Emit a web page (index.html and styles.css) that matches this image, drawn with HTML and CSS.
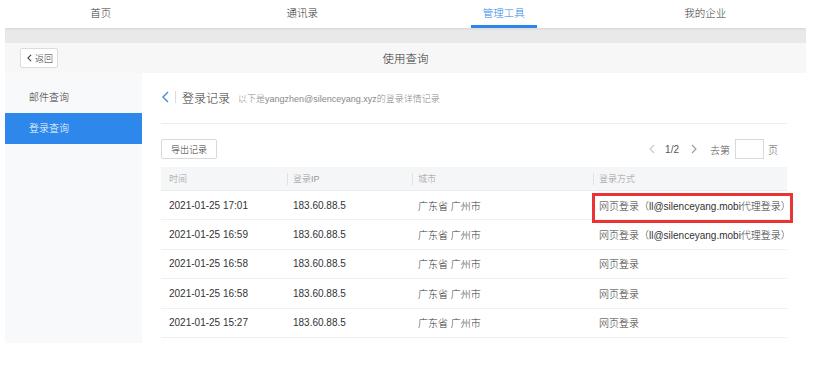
FILE: index.html
```html
<!DOCTYPE html>
<html lang="zh-CN">
<head>
  <meta charset="UTF-8"/>
  <meta name="viewport" content="width=device-width,initial-scale=1.0"/>
  <title>登录查询</title>
  <link rel="stylesheet" href="styles.css">
</head>
<body>
  <nav class="topnav">
    <a class="tab">首页</a>
    <a class="tab">通讯录</a>
    <a class="tab active"><span>管理工具</span></a>
    <a class="tab">我的企业</a>
  </nav>
  <div class="frame">
    <div class="bar">
      <div class="bar-left">
        <button class="back">
          <svg viewBox="0 0 6 10" fill="none" stroke="currentColor"><path d="M5 1 1 5l4 4"/></svg>
          返回
        </button>
      </div>
      <div class="bar-title">使用查询</div>
      <div></div>
    </div>
    <div class="body">
      <aside class="side">
        <div class="side-item">邮件查询</div>
        <div class="side-item active">登录查询</div>
      </aside>
      <main class="main">
        <div class="head">
          <svg class="head-back" viewBox="0 0 7 12" fill="none" stroke="currentColor"><path d="M6 1 1 6l5 5"/></svg>
          <span class="head-sep"></span>
          <span class="head-title">登录记录</span>
          <span class="head-sub">以下是yangzhen@silenceyang.xyz的登录详情记录</span>
        </div>
        <div class="tools">
          <button class="export">导出记录</button>
          <div class="pager">
            <svg class="pg-prev" viewBox="0 0 6 10" fill="none" stroke="currentColor"><path d="M5 1 1 5l4 4"/></svg>
            <span class="pg-num">1/2</span>
            <svg class="pg-next" viewBox="0 0 6 10" fill="none" stroke="currentColor"><path d="M1 1l4 4-4 4"/></svg>
            <span class="pg-go">去第</span>
            <input class="pg-input" type="text"/>
            <span class="pg-unit">页</span>
          </div>
        </div>
        <table class="log">
          <colgroup>
            <col style="width:126px"><col style="width:125px"><col style="width:181px"><col style="width:194px">
          </colgroup>
          <thead>
            <tr><th>时间</th><th>登录IP</th><th>城市</th><th>登录方式</th></tr>
          </thead>
          <tbody>
            <tr><td>2021-01-25 17:01</td><td>183.60.88.5</td><td>广东省 广州市</td><td class="mark">网页登录（ll@silenceyang.mobi代理登录）<span class="flag"></span></td></tr>
            <tr><td>2021-01-25 16:59</td><td>183.60.88.5</td><td>广东省 广州市</td><td>网页登录（ll@silenceyang.mobi代理登录）</td></tr>
            <tr><td>2021-01-25 16:58</td><td>183.60.88.5</td><td>广东省 广州市</td><td>网页登录</td></tr>
            <tr><td>2021-01-25 16:58</td><td>183.60.88.5</td><td>广东省 广州市</td><td>网页登录</td></tr>
            <tr><td>2021-01-25 15:27</td><td>183.60.88.5</td><td>广东省 广州市</td><td>网页登录</td></tr>
          </tbody>
        </table>
      </main>
    </div>
  </div>
</body>
</html>
```

FILE: styles.css
```css
body { margin:0; font-family:"Liberation Sans","Noto Sans CJK SC",sans-serif; font-weight:300; background:#fff; color:#333; }
.topnav { width:806px; height:28px; display:grid; grid-template-columns:repeat(4,1fr); background:#fff; }
.tab { display:flex; justify-content:center; font-size:10.5px; line-height:26px; color:#333; }
.tab.active span { color:#2b86e8; border-bottom:3px solid #2b86e8; padding:0 12px; height:25px; }
.frame { margin-left:5px; width:801px; background:#e9e9e9; padding-top:15px; box-shadow:inset 0 3px 3px -2px #d6d6d6; }
.bar { height:30px; background:#f7f7f7; display:grid; grid-template-columns:1fr auto 1fr; align-items:center; }
.bar-left { padding-left:15px; display:flex; }
.back {
  width:38px; height:20px; padding:0 0 0 6px; display:flex; align-items:center; gap:3px;
  background:#fff; border:1px solid #dcdcdc; border-radius:2px; font-family:inherit; font-weight:inherit; font-size:9px; color:#333;
}
.back svg { width:5px; height:8px; stroke-width:1.3px; }
.bar-title { font-size:11.5px; color:#333; }
.body { display:flex; height:270px; background:#fff; }
.side { width:137px; background:#f8f9fb; padding-top:9px; }
.side-item { height:31px; line-height:31px; padding-left:24px; font-size:10px; color:#333; }
.side-item.active { background:#2e87ea; color:#fff; }
.main { flex:1; padding:0 19px; }
.head {
  display:flex; align-items:center; padding:14px 0 16px 1px; height:20px;
  border-bottom:1px solid #ededed;
}
.head-back { width:7px; height:12px; color:#4a88d6; stroke-width:1.4px; }
.head-sep { width:1px; height:12px; background:#ddd; margin:0 6px 0 6px; }
.head-title { font-size:12px; color:#333; }
.head-sub { font-size:9px; color:#888; margin:3px 0 0 8px; }
.tools { display:flex; justify-content:space-between; align-items:center; margin-top:15px; height:20px; }
.export {
  width:56px; height:20px; padding:0; background:#fff; border:1px solid #d9d9d9; border-radius:2px;
  font-family:inherit; font-weight:inherit; font-size:9px; color:#333;
}
.pager { display:flex; align-items:center; padding-right:9px; font-size:10px; color:#555; }
.pager svg { width:6px; height:10px; stroke-width:1.1px; }
.pg-prev { color:#c8c8c8; }
.pg-next { color:#999; }
.pg-num { font-size:10px; margin:0 12px 0 10px; }
.pg-go { margin-left:13px; }
.pg-input { width:29px; height:20px; box-sizing:border-box; border:1px solid #d9d9d9; margin:0 4px 0 5px; padding:0; }
.log { width:626px; margin-top:8px; border-collapse:collapse; table-layout:fixed; }
.log th {
  position:relative; height:23px; padding:0 0 0 6px; text-align:left; font-weight:inherit;
  font-size:9px; color:#999; background:#f5f6f8; border-bottom:1px solid #ececec;
}
.log th + th::before { content:""; position:absolute; left:0; top:6px; width:1px; height:12px; background:#e2e2e2; }
.log td {
  height:28.4px; padding:0 0 0 6px; font-size:10px; color:#333; border-bottom:1px solid #f0f0f0;
  white-space:nowrap;
}
.log th:first-child, .log td:first-child { padding-left:8px; }
.log td.mark { position:relative; }
.flag {
  position:absolute; left:-1px; top:2px; width:195px; height:24px;
  border:3px solid #ea3434;
}
```
